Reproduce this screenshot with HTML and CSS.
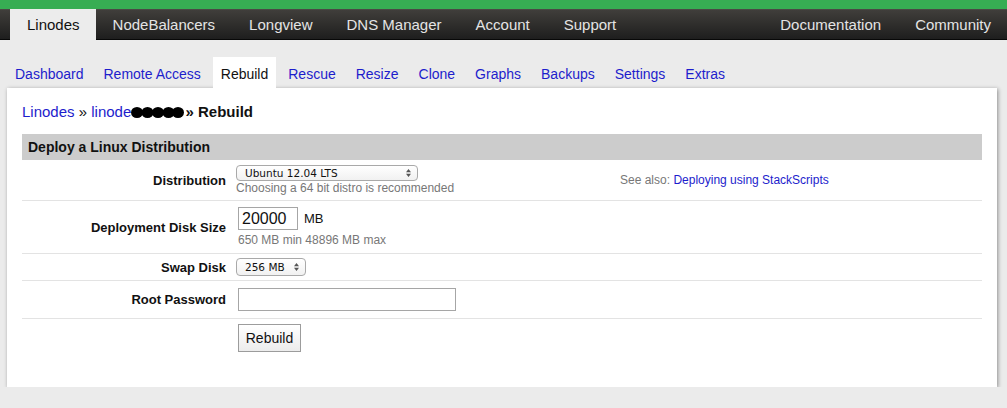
FILE: index.html
```html
<!DOCTYPE html>
<html>
<head>
<meta charset="utf-8">
<title>Linode Manager - Rebuild</title>
<link rel="stylesheet" href="styles.css">
</head>
<body>
<header class="topbar">
  <nav class="topnav">
    <a class="active" href="#">Linodes</a>
    <a href="#">NodeBalancers</a>
    <a href="#">Longview</a>
    <a href="#">DNS Manager</a>
    <a href="#">Account</a>
    <a href="#">Support</a>
  </nav>
  <nav class="topnav right">
    <a href="#">Documentation</a>
    <a href="#">Community</a>
  </nav>
</header>

<nav class="subtabs">
  <a href="#">Dashboard</a>
  <a href="#">Remote Access</a>
  <a class="active" href="#">Rebuild</a>
  <a href="#">Rescue</a>
  <a href="#">Resize</a>
  <a href="#">Clone</a>
  <a href="#">Graphs</a>
  <a href="#">Backups</a>
  <a href="#">Settings</a>
  <a href="#">Extras</a>
</nav>

<main class="panel">
  <div class="crumbs">
    <a href="#">Linodes</a> » <a href="#">linode</a><svg class="redact" width="53" height="13" viewBox="0 0 53 13"><ellipse cx="6" cy="6.5" rx="6" ry="5.5"/><ellipse cx="16.5" cy="6.5" rx="6" ry="5.5"/><ellipse cx="27" cy="6.5" rx="6" ry="5.5"/><ellipse cx="37.5" cy="6.5" rx="6" ry="5.5"/><ellipse cx="47" cy="6.5" rx="6" ry="5.5"/></svg><b class="current"> » Rebuild</b>
  </div>

  <section class="form">
    <h2 class="section-head">Deploy a Linux Distribution</h2>

    <div class="row r1">
      <label class="lbl">Distribution</label>
      <div class="field split">
        <div class="main">
          <div class="sel w-dist">
            <select><option>Ubuntu 12.04 LTS</option></select>
            <svg class="arrows" width="5" height="8" viewBox="0 0 5 8"><path d="M0 3.2 L2.5 0 L5 3.2 Z M0 4.8 L2.5 8 L5 4.8 Z"/></svg>
          </div>
          <div class="help">Choosing a 64 bit distro is recommended</div>
        </div>
        <div class="aside">See also: <a href="#">Deploying using StackScripts</a></div>
      </div>
    </div>

    <div class="row r2">
      <label class="lbl">Deployment Disk Size</label>
      <div class="field">
        <div class="inline"><input class="txt size" type="text" value="20000"><span class="unit">MB</span></div>
        <div class="help">650 MB min 48896 MB max</div>
      </div>
    </div>

    <div class="row r3">
      <label class="lbl">Swap Disk</label>
      <div class="field">
        <div class="sel w-swap">
          <select><option>256 MB</option></select>
          <svg class="arrows" width="5" height="8" viewBox="0 0 5 8"><path d="M0 3.2 L2.5 0 L5 3.2 Z M0 4.8 L2.5 8 L5 4.8 Z"/></svg>
        </div>
      </div>
    </div>

    <div class="row r4">
      <label class="lbl">Root Password</label>
      <div class="field"><input class="txt pw" type="password"></div>
    </div>

    <div class="row r5">
      <span></span>
      <div class="field"><button class="btn" type="button">Rebuild</button></div>
    </div>
  </section>
</main>
</body>
</html>
```

FILE: styles.css
```css
* { box-sizing: border-box; }

body {
  margin: 0;
  background: #ebebeb;
  font-family: "Liberation Sans", Arial, Helvetica, sans-serif;
  color: #111;
}

a { color: #1d1dcc; text-decoration: none; }

/* top bar */
.topbar {
  display: flex;
  border-top: 9px solid #37ad53;
  height: 40px;
  padding-left: 10px;
  background: linear-gradient(#55524e 0, #403e3b 1px, #2f2e2c 50%, #1e1e1e calc(100% - 1px), #080808 calc(100% - 1px));
}
.topnav { display: flex; }
.topnav.right { margin-left: auto; }
.topnav a {
  display: block;
  padding: 0 17px;
  line-height: 31px;
  font-size: 15px;
  color: #e4e4e4;
}
.topnav a.active { background: #ececec; color: #111; padding: 0 16px 0 17px; }
.topnav.right a:last-child { padding-right: 16px; }

/* sub tabs */
.subtabs {
  display: flex;
  margin-top: 17px;
  padding-left: 7px;
}
.subtabs a {
  display: block;
  height: 31px;
  padding: 3px 8px 0;
  margin-right: 4px;
  line-height: 28px;
  font-size: 14px;
}
.subtabs a.active { background: #fff; color: #111; }

/* panel */
.panel {
  margin: 0 10px 0 7px;
  background: #fff;
  padding: 15px 15px 35px;
  box-shadow: 1px 1px 4px rgba(0,0,0,0.4);
}
.crumbs {
  font-size: 15px;
  line-height: 18px;
  height: 18px;
  color: #111;
}
.current { font-weight: bold; margin-left: -3px; }
.redact { vertical-align: -2px; }

.form { margin-top: 13px; }
.section-head {
  margin: 0;
  height: 26px;
  line-height: 26px;
  padding-left: 6px;
  background: #cccccc;
  font-size: 14px;
  font-weight: bold;
  color: #111;
}

.row {
  display: grid;
  grid-template-columns: 204px 1fr;
  column-gap: 10px;
  align-items: center;
  border-bottom: 1px solid #e3e3e3;
}
.r1 { height: 41px; }
.r2 { height: 53px; }
.r3 { height: 27px; }
.r4 { height: 38px; }
.r5 { border-bottom: 0; align-items: start; padding-top: 5px; }

.lbl {
  text-align: right;
  font-size: 13px;
  font-weight: bold;
  color: #111;
}

.field { font-size: 12px; }
.split { display: flex; align-items: center; }
.split .main { width: 384px; }
.aside { color: #777; font-size: 12px; }

.help {
  color: #777;
  font-size: 12px;
  line-height: 14px;
}
.r2 .help { margin-top: 3px; margin-left: 2px; }

/* select */
.sel { position: relative; height: 16px; }
.sel select {
  -webkit-appearance: none;
  appearance: none;
  display: block;
  width: 100%;
  height: 100%;
  margin: 0;
  padding: 0 0 0 8px;
  border: 1px solid #a9a9a9;
  border-radius: 4px;
  background: linear-gradient(#ffffff, #f1f1f1);
  font-family: "DejaVu Sans", "Lucida Grande", sans-serif;
  font-size: 10.5px;
  color: #111;
  line-height: 14px;
}
.sel .arrows { position: absolute; right: 7px; top: 4px; fill: #555; }
.w-dist { width: 182px; }
.w-swap { width: 70px; height: 18px; }
.w-swap .arrows { top: 5px; }

/* inputs */
.inline { display: flex; align-items: center; }
.txt {
  margin: 0 0 0 2px;
  height: 23px;
  border: 1px solid #a6a6a6;
  background: #fff;
  padding: 0 3px;
  font-family: "Liberation Sans", Arial, sans-serif;
  color: #111;
}
.size { width: 60px; font-size: 16px; }
.unit { margin-left: 6px; font-size: 13px; color: #111; }
.pw { width: 218px; font-size: 14px; }

.btn {
  margin: 0 0 0 2px;
  height: 28px;
  width: 63px;
  padding: 0;
  border: 1px solid #9c9c9c;
  background: linear-gradient(#ffffff, #ececec);
  font-family: "Liberation Sans", Arial, sans-serif;
  font-size: 14px;
  color: #111;
}
```
